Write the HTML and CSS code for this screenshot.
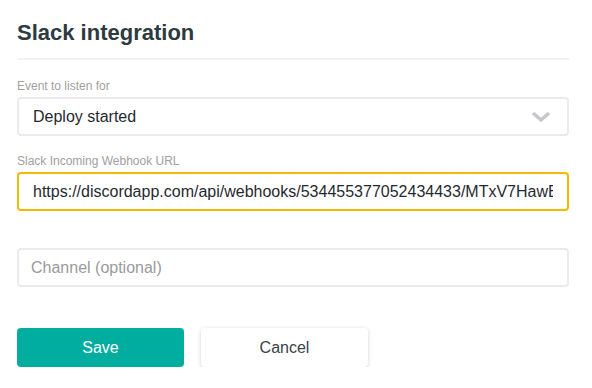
FILE: index.html
```html
<!DOCTYPE html>
<html lang="en">
<head>
  <meta charset="UTF-8" />
  <title>Slack integration</title>
  <link rel="stylesheet" href="styles.css">
</head>
<body>
  <div class="panel">
    <h2>Slack integration</h2>
    <div class="field">
      <label>Event to listen for</label>
      <div class="select">
        <span>Deploy started</span>
        <svg width="20" height="12" viewBox="0 0 20 12"><path d="M2 2 L10 9 L18 2" fill="none" stroke="#c4c8cc" stroke-width="3.5"/></svg>
      </div>
    </div>
    <div class="field">
      <label>Slack Incoming Webhook URL</label>
      <div class="input focused"><span class="value">https://discordapp.com/api/webhooks/534455377052434433/MTxV7HawB</span></div>
    </div>
    <div class="field spaced">
      <div class="input placeholder">Channel (optional)</div>
    </div>
    <div class="actions">
      <button class="btn primary">Save</button>
      <button class="btn">Cancel</button>
    </div>
  </div>
</body>
</html>
```

FILE: styles.css
```css
body {
  margin: 0;
  font-family: 'Liberation Sans', Arial, sans-serif;
  background: white;
  color: #222;
}

.panel {
  padding: 0 23px 0 17px;
}

h2 {
  margin: 0;
  padding: 20px 0 12px;
  font-size: 22px;
  font-weight: 700;
  color: #2d3a40;
  border-bottom: 2px solid #f2f2f2;
}

.field {
  margin-top: 20px;
}

.field + .field {
  margin-top: 19px;
}

.field.spaced {
  margin-top: 37px;
}

label {
  display: block;
  font-size: 12px;
  color: #a0a0a0;
  margin-bottom: 4px;
  line-height: 13px;
}

.select,
.input {
  box-sizing: border-box;
  height: 39px;
  border: 2px solid #ebebeb;
  border-radius: 4px;
  padding: 0 14px;
  font-size: 16px;
  display: flex;
  align-items: center;
  white-space: nowrap;
  overflow: hidden;
  color: #1f2a30;
}

.select {
  justify-content: space-between;
  padding-right: 16px;
}

.input.focused {
  border-color: #f5b800;
}

.value {
  display: block;
  overflow: hidden;
  flex: 1;
}

.input.placeholder {
  color: #9a9a9a;
  padding-left: 12px;
}

.actions {
  display: flex;
  gap: 17px;
  margin-top: 41px;
}

.btn {
  width: 167px;
  height: 39px;
  font-family: inherit;
  font-size: 16px;
  border-radius: 4px;
  border: none;
  background: white;
  color: #3a4248;
  box-shadow: 0 1px 4px rgba(0, 0, 0, 0.18);
}

.btn.primary {
  background: #00ad9f;
  color: white;
  box-shadow: none;
}
```
